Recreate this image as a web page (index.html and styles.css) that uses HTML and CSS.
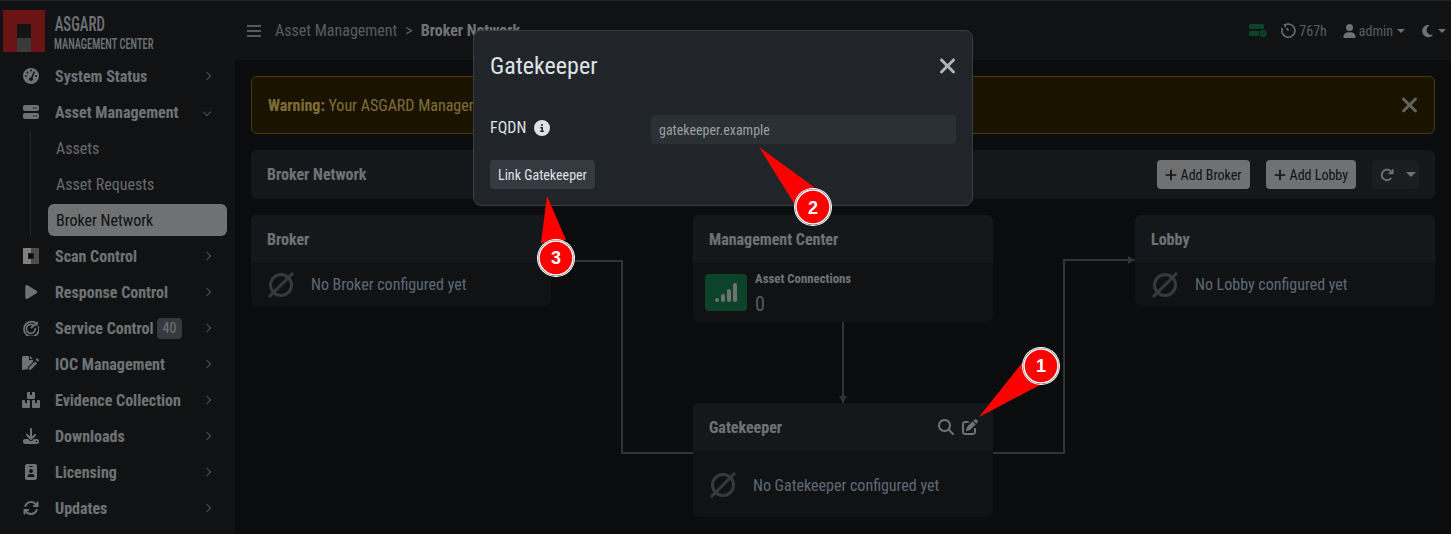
FILE: index.html
```html
<!DOCTYPE html>
<html lang="en">
<head>
<meta charset="UTF-8">
<title>ASGARD Management Center - Broker Network</title>
<link rel="stylesheet" href="styles.css">
</head>
<body>
<div class="app">
    <aside class="sidebar">
        <div class="brand">
            <div class="brand-logo"><span class="brand-door"></span></div>
            <div class="brand-text">
                <div class="brand-name">ASGARD</div>
                <div class="brand-sub">MANAGEMENT CENTER</div>
            </div>
        </div>
        <nav class="nav">
            <a class="nav-item">
                <svg class="nav-icon" viewBox="0 0 512 512"><path d="M0 256a256 256 0 1 1 512 0A256 256 0 1 1 0 256zm320 96c0-15-5-28-14-39l75-172c5-12 0-26-12-32s-26 0-32 12l-75 173c-37-3-70 26-70 58c0 35 29 64 64 64s64-29 64-64zM144 176a32 32 0 1 0 0-64 32 32 0 1 0 0 64zm-16 80a32 32 0 1 0-64 0 32 32 0 1 0 64 0zm288 32a32 32 0 1 0 0-64 32 32 0 1 0 0 64zM256 112a32 32 0 1 0 0-64 32 32 0 1 0 0 64z"/></svg>
                <span class="nav-label">System Status</span><span class="chev"></span>
            </a>
            <a class="nav-item">
                <svg class="nav-icon" viewBox="0 0 512 512"><path d="M64 32C28.7 32 0 60.7 0 96v64c0 35.3 28.7 64 64 64H448c35.3 0 64-28.7 64-64V96c0-35.3-28.7-64-64-64H64zm280 72a24 24 0 1 1 0 48 24 24 0 1 1 0-48zm48 24a24 24 0 1 1 48 0 24 24 0 1 1 -48 0zM64 288c-35.3 0-64 28.7-64 64v64c0 35.3 28.7 64 64 64H448c35.3 0 64-28.7 64-64V352c0-35.3-28.7-64-64-64H64zm280 72a24 24 0 1 1 0 48 24 24 0 1 1 0-48zm56 24a24 24 0 1 1 48 0 24 24 0 1 1 -48 0z"/></svg>
                <span class="nav-label">Asset Management</span><span class="chev chev-open"></span>
            </a>
            <div class="subnav">
                <a class="sub-item">Assets</a>
                <a class="sub-item">Asset Requests</a>
                <a class="sub-item active">Broker Network</a>
            </div>
            <a class="nav-item">
                <svg class="nav-icon" viewBox="0 0 16 16"><rect width="8" height="16" fill="#fff"/><rect x="8" width="8" height="16" fill="#999"/><rect x="5" y="5" width="6" height="6" fill="#444"/><rect x="6" y="6" width="4" height="4" fill="#111"/></svg>
                <span class="nav-label">Scan Control</span><span class="chev"></span>
            </a>
            <a class="nav-item">
                <svg class="nav-icon" viewBox="0 0 448 512"><path d="M73 39c-14.800-9.100-33.400-9.400-48.500-.9S0 62.600 0 80V432c0 17.400 9.400 33.400 24.500 41.900s33.700 8.100 48.500-.9L361 297c14.300-8.700 23-24.200 23-41s-8.700-32.200-23-41L73 39z" transform="translate(40)"/></svg>
                <span class="nav-label">Response Control</span><span class="chev"></span>
            </a>
            <a class="nav-item">
                <svg class="nav-icon nav-stroke" viewBox="0.500 0.500 15 15"><path d="M12.300 3.200A7 7 0 1 0 14.900 6.300"/><path d="M10.300 5.400A4.200 4.200 0 1 0 12 8.200"/><path d="M7.800 8.200 14.500 2.600M12 2.700l.3 1.900 2 .2"/></svg>
                <span class="nav-label">Service Control</span><span class="badge">40</span><span class="chev"></span>
            </a>
            <a class="nav-item">
                <svg class="nav-icon nav-wide" viewBox="0 0 18 16"><path d="M1.500 0H7v4h4l0 2-5 5-.5 2.500H1.500A1.500 1.500 0 0 1 0 14V1.500A1.500 1.500 0 0 1 1.500 0zM8 0l3 3H8zM7 11.500 13 5.500l2 2-6 6-2.500.5z"/><path d="M15 2l2.200 2.200-1.400 1.500-2.200-2.200z"/></svg>
                <span class="nav-label">IOC Management</span><span class="chev"></span>
            </a>
            <a class="nav-item">
                <svg class="nav-icon nav-wide" viewBox="0 0 18 16"><path d="M6 0h2v3h2V0h2a1 1 0 0 1 1 1v5a1 1 0 0 1-1 1H6a1 1 0 0 1-1-1V1a1 1 0 0 1 1-1zM1 8h2v3h2V8h2a1 1 0 0 1 1 1v6a1 1 0 0 1-1 1H1a1 1 0 0 1-1-1V9a1 1 0 0 1 1-1zM11 8h2v3h2V8h2a1 1 0 0 1 1 1v6a1 1 0 0 1-1 1h-6a1 1 0 0 1-1-1V9a1 1 0 0 1 1-1z"/></svg>
                <span class="nav-label">Evidence Collection</span><span class="chev"></span>
            </a>
            <a class="nav-item">
                <svg class="nav-icon" viewBox="0 0 512 512"><path d="M288 32c0-17.700-14.300-32-32-32s-32 14.300-32 32V274.700l-73.400-73.400c-12.500-12.500-32.800-12.500-45.300 0s-12.500 32.800 0 45.300l128 128c12.500 12.500 32.800 12.500 45.300 0l128-128c12.500-12.500 12.500-32.800 0-45.300s-32.800-12.500-45.300 0L288 274.700V32zM64 352c-35.300 0-64 28.700-64 64v32c0 35.300 28.700 64 64 64H448c35.300 0 64-28.700 64-64V416c0-35.300-28.700-64-64-64H346.500l-45.300 45.300c-25 25-65.500 25-90.500 0L165.500 352H64zm368 56a24 24 0 1 1 0 48 24 24 0 1 1 0-48z"/></svg>
                <span class="nav-label">Downloads</span><span class="chev"></span>
            </a>
            <a class="nav-item">
                <svg class="nav-icon" viewBox="-64 0 512 512"><path d="M64 0C28.700 0 0 28.700 0 64V448c0 35.300 28.700 64 64 64H320c35.300 0 64-28.700 64-64V64c0-35.300-28.700-64-64-64H64zm96 320h64c44.200 0 80 35.800 80 80c0 8.800-7.200 16-16 16H96c-8.800 0-16-7.200-16-16c0-44.200 35.800-80 80-80zm-32-96a64 64 0 1 1 128 0 64 64 0 1 1 -128 0zM144 64h96c8.800 0 16 7.200 16 16s-7.200 16-16 16H144c-8.800 0-16-7.200-16-16s7.200-16 16-16z"/></svg>
                <span class="nav-label">Licensing</span><span class="chev"></span>
            </a>
            <a class="nav-item">
                <svg class="nav-icon" viewBox="0 0 512 512"><path d="M105.100 202.600c7.700-21.800 20.200-42.300 37.800-59.800c62.500-62.500 163.800-62.500 226.300 0L386.300 160H352c-17.700 0-32 14.300-32 32s14.300 32 32 32H463.500c0 0 0 0 0 0h.4c17.700 0 32-14.300 32-32V80c0-17.700-14.300-32-32-32s-32 14.300-32 32v35.200L414.400 97.600c-87.500-87.500-229.300-87.500-316.800 0C73.200 122 55.600 150.700 44.800 181.400c-5.900 16.700 2.900 34.900 19.500 40.800s34.900-2.900 40.800-19.500zM39 289.300c-5 1.500-9.800 4.200-13.700 8.200c-4 4-6.700 8.800-8.100 14c-.3 1.200-.6 2.500-.8 3.800c-.3 1.700-.4 3.400-.4 5.100V432c0 17.700 14.300 32 32 32s32-14.300 32-32V396.900l17.600 17.500 0 0c87.500 87.400 229.300 87.400 316.700 0c24.400-24.400 42.100-53.100 52.900-83.700c5.900-16.700-2.900-34.900-19.500-40.800s-34.900 2.900-40.800 19.500c-7.700 21.800-20.200 42.300-37.800 59.800c-62.500 62.500-163.800 62.500-226.300 0l-.1-.1L125.600 352H160c17.700 0 32-14.300 32-32s-14.300-32-32-32H48.400c-1.600 0-3.200 .1-4.800 .3s-3.100 .5-4.600 1z"/></svg>
                <span class="nav-label">Updates</span><span class="chev"></span>
            </a>
        </nav>
    </aside>

    <div class="main">
        <header class="topbar">
            <svg class="burger" viewBox="0 0 14 12"><path d="M0 1h14M0 6h14M0 11h14"/></svg>
            <span class="crumb">Asset Management</span>
            <span class="crumb-sep">&gt;</span>
            <span class="crumb-current">Broker Network</span>
            <div class="top-right">
                <svg class="top-server" viewBox="0 0 18 13"><path d="M1.500 0h12A1.500 1.500 0 0 1 15 1.500v2A1.500 1.500 0 0 1 13.500 5h-12A1.500 1.500 0 0 1 0 3.500v-2A1.500 1.500 0 0 1 1.500 0zM1.500 7h9.200a5 5 0 0 0-.7 5H1.500A1.500 1.500 0 0 1 0 10.500v-2A1.500 1.500 0 0 1 1.500 7z"/><circle cx="14" cy="9.500" r="3.500"/><path class="tick" d="M12.400 9.600l1.100 1.100 2-2.100"/></svg>
                <span class="top-item">
                    <svg class="top-clock" viewBox="0 0 16 16"><path d="M4.300 2.200A7 7 0 1 1 1.600 5.200"/><path d="M3 1.500l1.500 1 .1 2M8 8 5.800 5.500"/></svg>767h
                </span>
                <span class="top-item top-user">
                    <svg class="top-icon" viewBox="0 0 448 512"><path d="M224 256A128 128 0 1 0 224 0a128 128 0 1 0 0 256zm-45.700 48C79.800 304 0 383.800 0 482.300C0 498.700 13.300 512 29.700 512H418.300c16.400 0 29.700-13.300 29.700-29.700C448 383.800 368.200 304 269.700 304H178.300z"/></svg>admin<span class="caret"></span>
                </span>
                <span class="top-item">
                    <svg class="top-icon" viewBox="0 0 384 512"><path d="M223.500 32C100 32 0 132.300 0 256S100 480 223.500 480c60.600 0 115.500-24.200 155.800-63.400c5-4.900 6.300-12.500 3.100-18.700s-10.100-9.700-17-8.500c-9.800 1.700-19.800 2.600-30.100 2.600c-96.900 0-175.500-78.800-175.500-176c0-65.800 36-123.100 89.300-153.300c6.100-3.500 9.200-10.500 7.700-17.300s-7.300-11.900-14.300-12.500c-6.300-.5-12.600-.8-19-.8z"/></svg><span class="caret"></span>
                </span>
            </div>
        </header>

        <div class="content">
            <div class="alert">
                <span><b>Warning:</b> Your ASGARD Management Center license is about to expire</span>
                <svg class="alert-close" viewBox="0 0 320 512"><path d="M310.600 150.600c12.500-12.500 12.500-32.800 0-45.300s-32.800-12.500-45.300 0L160 210.700 54.600 105.400c-12.500-12.500-32.800-12.500-45.300 0s-12.500 32.800 0 45.300L114.700 256 9.400 361.400c-12.500 12.500-12.500 32.800 0 45.300s32.800 12.500 45.300 0L160 301.300 265.400 406.600c12.500 12.500 32.800 12.500 45.300 0s12.500-32.800 0-45.300L205.300 256 310.600 150.600z"/></svg>
            </div>

            <div class="toolbar">
                <span class="toolbar-title">Broker Network</span>
                <div class="toolbar-actions">
                    <button class="btn-add"><svg viewBox="0 0 448 512"><path d="M256 80c0-17.700-14.300-32-32-32s-32 14.300-32 32V224H48c-17.700 0-32 14.300-32 32s14.300 32 32 32H192V432c0 17.700 14.300 32 32 32s32-14.300 32-32V288H400c17.700 0 32-14.300 32-32s-14.300-32-32-32H256V80z"/></svg>Add Broker</button>
                    <button class="btn-add"><svg viewBox="0 0 448 512"><path d="M256 80c0-17.700-14.300-32-32-32s-32 14.300-32 32V224H48c-17.700 0-32 14.300-32 32s14.300 32 32 32H192V432c0 17.700 14.300 32 32 32s32-14.300 32-32V288H400c17.700 0 32-14.300 32-32s-14.300-32-32-32H256V80z"/></svg>Add Lobby</button>
                    <button class="btn-refresh"><svg viewBox="0 0 512 512"><path d="M386.300 160H336c-17.700 0-32 14.300-32 32s14.300 32 32 32H464c17.700 0 32-14.300 32-32V64c0-17.700-14.300-32-32-32s-32 14.300-32 32v51.200L414.400 97.600c-87.500-87.500-229.300-87.500-316.800 0s-87.500 229.300 0 316.800s229.300 87.500 316.800 0c12.500-12.500 12.500-32.800 0-45.300s-32.800-12.500-45.300 0c-62.500 62.500-163.800 62.500-226.300 0s-62.500-163.800 0-226.300s163.800-62.500 226.300 0L386.300 160z"/></svg><span class="caret caret-lg"></span></button>
                </div>
            </div>

            <div class="graph">
                <svg class="edges" viewBox="0 0 1184 319" width="1184" height="319">
                    <path d="M300 46H371V238H442"/>
                    <path d="M592 107V188"/>
                    <path d="M742 238H813V45H884"/>
                    <path class="arrow" d="M592 188l-4-7h8z"/>
                    <path class="arrow" d="M884 45l-7-4v8z"/>
                </svg>

                <div class="node node-broker">
                    <div class="node-head">Broker</div>
                    <div class="node-body">
                        <svg class="empty-icon" viewBox="0 0 28 28"><circle cx="14" cy="14" r="10.500"/><path d="M2 26 26 2"/></svg>
                        <span class="empty-text">No Broker configured yet</span>
                    </div>
                </div>

                <div class="node node-center">
                    <div class="node-head">Management Center</div>
                    <div class="node-body node-stat">
                        <div class="stat-icon">
                            <svg viewBox="0 0 24 20"><rect x="1" y="15" width="4" height="4" rx="2"/><rect x="7" y="11" width="4" height="8" rx="2"/><rect x="13" y="6" width="4" height="13" rx="2"/><rect x="19" y="0" width="4" height="19" rx="2"/></svg>
                        </div>
                        <div>
                            <div class="stat-label">Asset Connections</div>
                            <div class="stat-value">0</div>
                        </div>
                    </div>
                </div>

                <div class="node node-gate">
                    <div class="node-head">
                        Gatekeeper
                        <span class="node-tools">
                            <svg viewBox="0 0 512 512"><path d="M416 208c0 45.900-14.900 88.300-40 122.700L502.600 457.400c12.500 12.500 12.500 32.800 0 45.300s-32.800 12.500-45.300 0L330.700 376c-34.400 25.200-76.800 40-122.700 40C93.100 416 0 322.900 0 208S93.100 0 208 0S416 93.100 416 208zM208 352a144 144 0 1 0 0-288 144 144 0 1 0 0 288z"/></svg>
                            <svg viewBox="0 0 512 512"><path d="M471.600 21.700c-21.900-21.900-57.300-21.900-79.200 0L362.300 51.700l97.900 97.900 30.100-30.100c21.900-21.900 21.900-57.300 0-79.200L471.600 21.700zm-299.200 220c-6.100 6.100-10.800 13.600-13.500 21.900l-29.600 88.800c-2.900 8.600-.6 18.100 5.800 24.600s15.900 8.700 24.600 5.800l88.800-29.600c8.200-2.700 15.700-7.400 21.900-13.500L437.700 172.300 339.700 74.300 172.400 241.700zM96 64C43 64 0 107 0 160V416c0 53 43 96 96 96H352c53 0 96-43 96-96V320c0-17.700-14.300-32-32-32s-32 14.300-32 32v96c0 17.700-14.300 32-32 32H96c-17.700 0-32-14.300-32-32V160c0-17.700 14.300-32 32-32h96c17.700 0 32-14.300 32-32s-14.300-32-32-32H96z"/></svg>
                        </span>
                    </div>
                    <div class="node-body node-body-tall">
                        <svg class="empty-icon" viewBox="0 0 28 28"><circle cx="14" cy="14" r="10.500"/><path d="M2 26 26 2"/></svg>
                        <span class="empty-text">No Gatekeeper configured yet</span>
                    </div>
                </div>

                <div class="node node-lobby">
                    <div class="node-head">Lobby</div>
                    <div class="node-body">
                        <svg class="empty-icon" viewBox="0 0 28 28"><circle cx="14" cy="14" r="10.500"/><path d="M2 26 26 2"/></svg>
                        <span class="empty-text">No Lobby configured yet</span>
                    </div>
                </div>
            </div>
        </div>
    </div>
</div>

<div class="backdrop">
    <div class="modal">
        <div class="modal-head">
            <h5 class="modal-title">Gatekeeper</h5>
            <svg class="modal-close" viewBox="0 0 320 512"><path d="M310.600 150.600c12.500-12.500 12.500-32.800 0-45.300s-32.800-12.500-45.300 0L160 210.700 54.600 105.400c-12.500-12.500-32.800-12.500-45.300 0s-12.500 32.800 0 45.300L114.700 256 9.400 361.400c-12.500 12.500-12.500 32.800 0 45.300s32.800 12.500 45.300 0L160 301.300 265.400 406.600c12.500 12.500 32.800 12.500 45.300 0s12.500-32.800 0-45.300L205.300 256 310.600 150.600z"/></svg>
        </div>
        <div class="modal-body">
            <div class="field">
                <label class="field-label" for="fqdn">FQDN
                    <svg viewBox="0 0 512 512"><path d="M256 512A256 256 0 1 0 256 0a256 256 0 1 0 0 512zM216 336h24V272H216c-13.300 0-24-10.700-24-24s10.700-24 24-24h48c13.300 0 24 10.700 24 24v88h8c13.300 0 24 10.700 24 24s-10.700 24-24 24H216c-13.300 0-24-10.700-24-24s10.700-24 24-24zm40-208a32 32 0 1 1 0 64 32 32 0 1 1 0-64z"/></svg>
                </label>
                <input class="field-input" id="fqdn" type="text" placeholder="gatekeeper.example">
            </div>
            <button class="btn-link">Link Gatekeeper</button>
        </div>
    </div>
</div>

<svg class="callouts" viewBox="0 0 1451 534" width="1451" height="534">
    <g class="callout">
        <path class="tail" d="M979 417 1022 363 1040 385z"/>
        <circle class="ring-out" cx="1041" cy="366" r="19"/><circle class="ring-mid" cx="1041" cy="366" r="18"/><circle class="ring-in" cx="1041" cy="366" r="17"/>
        <text x="1041" y="372">1</text>
    </g>
    <g class="callout">
        <path class="tail" d="M759 147 814 187 795 205z"/>
        <circle class="ring-out" cx="813" cy="207" r="19"/><circle class="ring-mid" cx="813" cy="207" r="18"/><circle class="ring-in" cx="813" cy="207" r="17"/>
        <text x="813" y="214">2</text>
    </g>
    <g class="callout">
        <path class="tail" d="M547 196 566 240 541 243z"/>
        <circle class="ring-out" cx="556" cy="258" r="19"/><circle class="ring-mid" cx="556" cy="258" r="18"/><circle class="ring-in" cx="556" cy="258" r="17"/>
        <text x="556" y="264">3</text>
    </g>
</svg>
</body>
</html>
```

FILE: styles.css
```css
* {
    box-sizing: border-box;
}

body {
    margin: 0;
    height: 534px;
    overflow: hidden;
    background-color: #16181b;
    color: #dee2e6;
    font-family: "Roboto Condensed", Roboto, sans-serif;
    font-stretch: condensed;
    font-size: 16px;
}

.app {
    display: flex;
    height: 534px;
    border-top: 1px solid #44464c;
}

/* sidebar */
.sidebar {
    width: 235px;
    flex-shrink: 0;
    background-color: #212529;
}

.brand {
    display: flex;
    gap: 9px;
    padding: 9px 0 0 3px;
    height: 57px;
}

.brand-logo {
    width: 42px;
    height: 42px;
    background-color: #d62828;
    padding: 14px 14px 0;
}

.brand-door {
    display: block;
    height: 28px;
    background: linear-gradient(#282828 50%, #747474 50%);
}

.brand-text {
    transform: scaleX(0.7);
    transform-origin: left top;
    white-space: nowrap;
    font-weight: 500;
    color: #dee2e6;
}

.brand-name {
    font-size: 21px;
    line-height: 24px;
    margin-top: 2px;
    margin-left: 1px;
}

.brand-sub {
    font-size: 15px;
    line-height: 16px;
}

.nav-item {
    display: flex;
    align-items: center;
    height: 36px;
    padding-left: 23px;
    color: #dee2e6;
    font-weight: 700;
}

.nav-icon {
    width: 16px;
    height: 16px;
    margin-right: 16px;
    fill: #dee2e6;
}

.nav-wide {
    width: 18px;
    margin-left: -1px;
    margin-right: 15px;
}

.nav-stroke {
    fill: none;
    stroke: #dee2e6;
    stroke-width: 1.600;
}

.chev {
    width: 6px;
    height: 6px;
    margin-left: auto;
    margin-right: 25px;
    border-top: 1px solid #9aa0a6;
    border-right: 1px solid #9aa0a6;
    transform: rotate(45deg);
}

.chev-open {
    transform: rotate(135deg);
}

.badge {
    margin-left: 3px;
    padding: 0 6px;
    height: 21px;
    line-height: 21px;
    border-radius: 4px;
    background-color: #6c757d;
    font-weight: 400;
    font-size: 14px;
}

.subnav {
    margin-left: 30px;
    border-left: 1px solid #495057;
    padding-left: 17px;
    width: 197px;
}

.sub-item {
    display: block;
    height: 36px;
    line-height: 38px;
    padding-left: 8px;
    color: #ced4da;
}

.sub-item.active {
    height: 32px;
    line-height: 34px;
    margin-top: 2px;
    margin-bottom: 2px;
    background-color: #dee2e6;
    color: #212529;
    border-radius: 6px;
}

/* top bar */
.main {
    flex: 1;
    min-width: 0;
}

.topbar {
    display: flex;
    align-items: center;
    height: 59px;
    padding: 0 5px 0 12px;
    background-color: #212529;
    color: #adb5bd;
}

.burger {
    width: 14px;
    height: 12px;
    margin-right: 14px;
    stroke: #dee2e6;
    stroke-width: 1.700;
    fill: none;
}

.crumb-sep {
    margin: 0 8px;
}

.crumb-current {
    font-weight: 700;
    color: #dee2e6;
}

.top-right {
    display: flex;
    align-items: center;
    gap: 16px;
    margin-left: auto;
    font-size: 14px;
}

.top-server {
    width: 18px;
    height: 13px;
    margin-right: -2px;
    fill: #198754;
}

.top-server .tick {
    fill: none;
    stroke: #212529;
    stroke-width: 1;
}

.top-item {
    display: flex;
    align-items: center;
    gap: 3px;
}

.top-clock {
    width: 15px;
    height: 15px;
    fill: none;
    stroke: #dee2e6;
    stroke-width: 1.600;
}

.top-icon {
    width: 13px;
    height: 14px;
    fill: #dee2e6;
}

.caret {
    width: 0;
    height: 0;
    margin-left: 1px;
    border-top: 4px solid #dee2e6;
    border-left: 4px solid transparent;
    border-right: 4px solid transparent;
}

/* content */
.content {
    padding: 16px;
}

.alert {
    display: flex;
    align-items: center;
    justify-content: space-between;
    height: 58px;
    padding: 0 16px;
    background-color: #332701;
    border: 1px solid #997404;
    border-radius: 6px;
    color: #ffda6a;
}

.alert-close {
    width: 15px;
    height: 24px;
    margin-right: 1px;
    fill: #c8c6b4;
}

.toolbar {
    display: flex;
    align-items: center;
    justify-content: space-between;
    height: 49px;
    margin-top: 16px;
    padding: 0 16px;
    background-color: #2b3035;
    border-radius: 6px;
}

.toolbar-title {
    font-weight: 700;
}

.toolbar-actions {
    display: flex;
    align-items: center;
    gap: 16px;
}

.btn-add {
    display: flex;
    align-items: center;
    gap: 4px;
    height: 29px;
    padding: 0 8px;
    border: 0;
    border-radius: 4px;
    background-color: #dee2e6;
    color: #212529;
    font: inherit;
    font-size: 14px;
}

.btn-add svg {
    width: 12px;
    height: 14px;
    fill: #212529;
}

.btn-refresh {
    display: flex;
    align-items: center;
    gap: 11px;
    width: 47px;
    height: 29px;
    padding: 0 8px;
    border: 0;
    border-radius: 4px;
    background-color: #373c41;
}

.btn-refresh svg {
    width: 14px;
    height: 14px;
    flex-shrink: 0;
    fill: #dee2e6;
}

.caret-lg {
    border-top-width: 5px;
    border-left-width: 5px;
    border-right-width: 5px;
}

/* diagram */
.graph {
    position: relative;
    height: 319px;
    margin-top: 16px;
}

.edges {
    position: absolute;
    left: 0;
    top: 0;
}

.edges path {
    fill: none;
    stroke: #666;
    stroke-width: 2;
}

.edges .arrow {
    fill: #666;
    stroke: none;
}

.node {
    position: absolute;
    width: 300px;
    background-color: #212529;
    border-radius: 6px;
    overflow: hidden;
}

.node-broker { left: 0; top: 0; }
.node-center { left: 442px; top: 0; }
.node-gate { left: 442px; top: 188px; }
.node-lobby { left: 884px; top: 0; }

.node-head {
    display: flex;
    align-items: center;
    justify-content: space-between;
    height: 48px;
    padding: 0 16px;
    background-color: #2b3035;
    font-weight: 700;
}

.node-tools {
    display: flex;
    gap: 8px;
    margin-right: -1px;
}

.node-tools svg {
    width: 16px;
    height: 16px;
    fill: #dee2e6;
}

.node-body {
    display: flex;
    align-items: center;
    height: 43px;
    padding-left: 16px;
}

.node-body-tall {
    height: 66px;
    padding-top: 2px;
}

.empty-icon {
    width: 28px;
    height: 28px;
    margin-right: 16px;
    fill: none;
    stroke: #6c757d;
    stroke-width: 3;
}

.empty-text {
    color: #bccfe2;
}

.node-stat {
    height: 59px;
    padding-left: 12px;
    gap: 8px;
}

.stat-icon {
    display: flex;
    align-items: center;
    justify-content: center;
    width: 42px;
    height: 37px;
    border-radius: 4px;
    background-color: #198754;
}

.stat-icon svg {
    width: 24px;
    height: 20px;
    fill: #dee2e6;
}

.stat-label {
    font-size: 12.800px;
    font-weight: 700;
}

.stat-value {
    margin-top: 7px;
    font-size: 20px;
    line-height: 22px;
    color: #adb5bd;
}

/* modal */
.backdrop {
    position: absolute;
    inset: 0;
    height: 534px;
    background-color: rgba(0, 0, 0, 0.5);
    padding: 30px 0 0 473px;
}

.modal {
    width: 500px;
    height: 176px;
    background-color: #212529;
    border: 1px solid #3a3f45;
    border-radius: 8px;
}

.modal-head {
    display: flex;
    align-items: center;
    justify-content: space-between;
    padding: 16px 16px 0;
    height: 54px;
}

.modal-title {
    margin: 0;
    font-size: 24px;
    font-weight: 400;
}

.modal-close {
    width: 15px;
    height: 24px;
    margin-right: 1px;
    fill: #adb5bd;
}

.modal-body {
    padding: 30px 16px 0;
}

.field {
    display: flex;
    align-items: center;
    height: 29px;
}

.field-label {
    display: flex;
    align-items: center;
    gap: 8px;
    width: 161px;
    margin-top: -4px;
    font-size: 16px;
}

.field-label svg {
    width: 16px;
    height: 16px;
    fill: #dee2e6;
}

.field-input {
    width: 305px;
    height: 29px;
    padding: 0 8px;
    border: 0;
    border-radius: 4px;
    background-color: #2b3035;
    font: inherit;
    font-size: 14px;
}

.field-input::placeholder {
    color: #9a9fa4;
}

.btn-link {
    display: block;
    height: 29px;
    margin-top: 16px;
    padding: 0 8px;
    border: 0;
    border-radius: 4px;
    background-color: #343a40;
    color: #dee2e6;
    font: inherit;
    font-size: 14px;
}

/* numbered callouts */
.callouts {
    position: absolute;
    left: 0;
    top: 0;
}

.tail {
    fill: #f00;
}

.ring-out {
    fill: #fff;
}

.ring-mid {
    fill: #222;
}

.ring-in {
    fill: #f00;
    stroke: #fff;
    stroke-width: 1.500;
}

.callout text {
    fill: #fff;
    font-family: "Liberation Sans", sans-serif;
    font-size: 18px;
    font-weight: 700;
    text-anchor: middle;
}
```
